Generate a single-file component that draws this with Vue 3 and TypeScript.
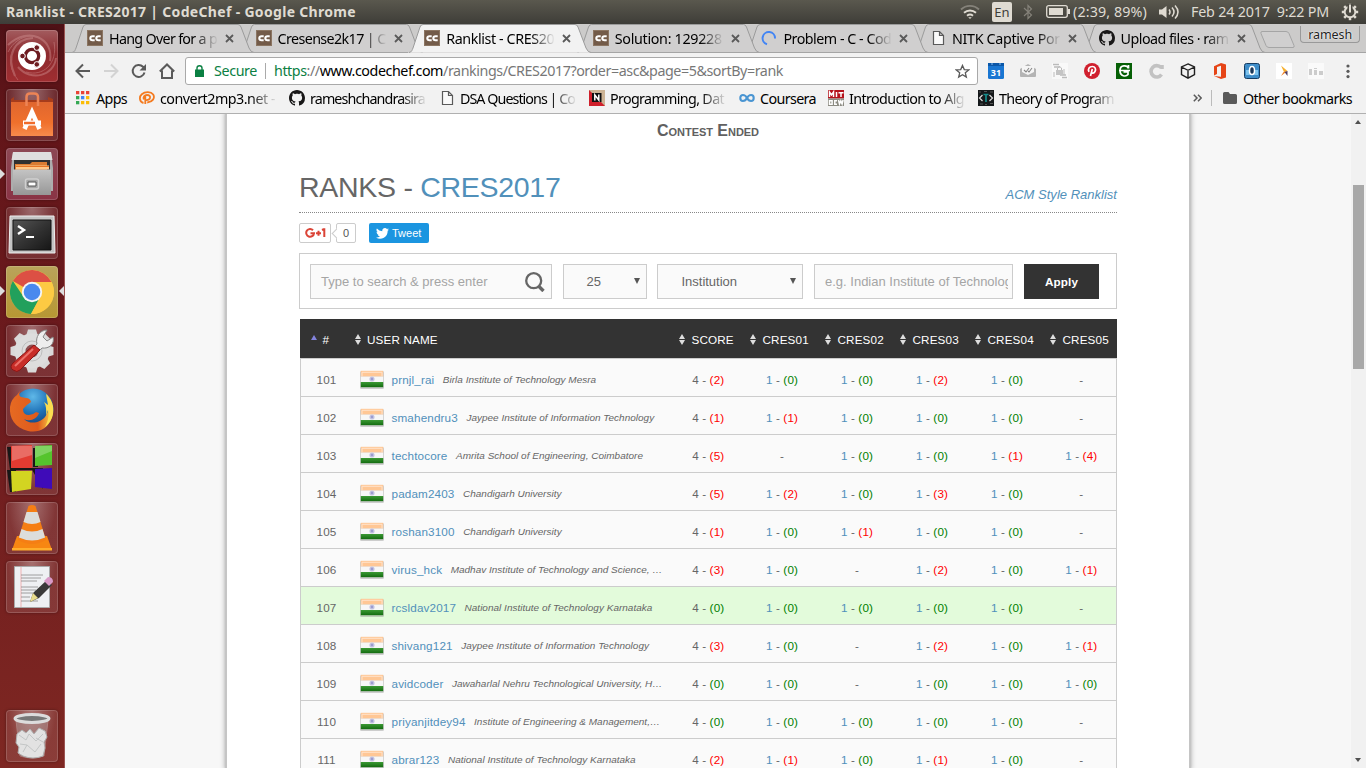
<script setup lang="ts">
import type { Directive } from 'vue'

// Tracks a label out (or in) so that it fills the given width in pixels.
const vFit: Directive<HTMLElement, number> = {
  mounted(el, binding) {
    const natural = el.getBoundingClientRect().width
    const count = (el.textContent ?? '').length
    if (count && natural) el.style.letterSpacing = `${(binding.value - natural) / count}px`
  },
}

interface Tab { icon: string; title: string; width: number; active?: boolean }
const tabs: Tab[] = [
  { icon: 'cc', title: 'Hang Over for a p', width: 108 },
  { icon: 'cc', title: 'Cresense2k17 | C', width: 108 },
  { icon: 'cc', title: 'Ranklist - CRES20', width: 108, active: true },
  { icon: 'cc', title: 'Solution: 129228', width: 107 },
  { icon: 'spin', title: 'Problem - C - Cod', width: 108 },
  { icon: 'page', title: 'NITK Captive Por', width: 108 },
  { icon: 'git', title: 'Upload files · ram', width: 108 },
]
const period = 168.5
const shape = (i: number): string => {
  const x = 7 + i * period
  return `M${x} 28.5C${x + 3} 28 ${x + 3} 26 ${x + 4} 24L${x + 11} 3Q${x + 12} .5 ${x + 14} .5H${x + 166}Q${x + 168} .5 ${x + 169} 3L${x + 177} 24Q${x + 179} 28.5 ${x + 182} 28.5`
}
const order = [6, 5, 4, 3, 1, 0, 2]

interface Bookmark { icon: string; title: string; width: number; box: number }
const bookmarks: Bookmark[] = [
  { icon: 'apps', title: 'Apps', width: 31, box: 42 },
  { icon: 'mp3', title: 'convert2mp3.net -', width: 115, box: 129 },
  { icon: 'git', title: 'rameshchandrasira', width: 115, box: 129 },
  { icon: 'page', title: 'DSA Questions | Co', width: 115, box: 129 },
  { icon: 'n', title: 'Programming, Dat', width: 114, box: 129 },
  { icon: 'coursera', title: 'Coursera', width: 56, box: 68 },
  { icon: 'mit', title: 'Introduction to Alg', width: 115, box: 129 },
  { icon: 'theory', title: 'Theory of Program', width: 115, box: 129 },
]

interface Row { rank: number; user: string; school: string; score: number; cells: (number | null)[]; own?: boolean }
const rows: Row[] = [
  { rank: 101, user: 'prnjl_rai', school: 'Birla Institute of Technology Mesra', score: 2, cells: [0, 0, 2, 0, null] },
  { rank: 102, user: 'smahendru3', school: 'Jaypee Institute of Information Technology', score: 1, cells: [1, 0, 0, 0, null] },
  { rank: 103, user: 'techtocore', school: 'Amrita School of Engineering, Coimbatore', score: 5, cells: [null, 0, 0, 1, 4] },
  { rank: 104, user: 'padam2403', school: 'Chandigarh University', score: 5, cells: [2, 0, 3, 0, null] },
  { rank: 105, user: 'roshan3100', school: 'Chandigarh University', score: 1, cells: [0, 1, 0, 0, null] },
  { rank: 106, user: 'virus_hck', school: 'Madhav Institute of Technology and Science, …', score: 3, cells: [0, null, 2, 0, 1] },
  { rank: 107, user: 'rcsldav2017', school: 'National Institute of Technology Karnataka', score: 0, cells: [0, 0, 0, 0, null], own: true },
  { rank: 108, user: 'shivang121', school: 'Jaypee Institute of Information Technology', score: 3, cells: [0, null, 2, 0, 1] },
  { rank: 109, user: 'avidcoder', school: 'Jawaharlal Nehru Technological University, H…', score: 0, cells: [0, null, 0, 0, 0] },
  { rank: 110, user: 'priyanjitdey94', school: 'Institute of Engineering & Management,…', score: 0, cells: [0, 0, 0, 0, null] },
  { rank: 111, user: 'abrar123', school: 'National Institute of Technology Karnataka', score: 2, cells: [1, 0, 1, 0, null] },
]
const heads = ['SCORE', 'CRES01', 'CRES02', 'CRES03', 'CRES04', 'CRES05']
const tone = (n: number): string => (n > 0 ? 'bad' : 'good')
const teeth = [0, 45, 90, 135, 180, 225, 270, 315]
</script>

<template>
  <div class="desktop">
    <svg class="defs" width="0" height="0">
      <defs>
        <linearGradient id="gOrange" x1="0" y1="0" x2="0" y2="1"><stop offset="0" stop-color="#e0662f" /><stop offset=".6" stop-color="#f0702c" /><stop offset="1" stop-color="#f78b4c" /></linearGradient>
        <linearGradient id="gGrey" x1="0" y1="0" x2="0" y2="1"><stop offset="0" stop-color="#c4c4c4" /><stop offset="1" stop-color="#979797" /></linearGradient>
        <linearGradient id="gTerm" x1="0" y1="0" x2="1" y2="1"><stop offset="0" stop-color="#555" /><stop offset=".5" stop-color="#333" /><stop offset="1" stop-color="#161616" /></linearGradient>
        <radialGradient id="gBlue" cx=".5" cy=".2" r=".8"><stop offset="0" stop-color="#5fb8e8" /><stop offset=".5" stop-color="#1f72b8" /><stop offset="1" stop-color="#12356e" /></radialGradient>
        <linearGradient id="gFox" x1="0" y1="0" x2="1" y2="0"><stop offset="0" stop-color="#e66a22" /><stop offset=".65" stop-color="#df5a1c" /><stop offset="1" stop-color="#fbd84a" /></linearGradient>
        <linearGradient id="gFlag" x1="0" y1="0" x2="0" y2="1"><stop offset="0" stop-color="#3c9a35" /><stop offset="1" stop-color="#136b10" /></linearGradient>
        <symbol id="cc" viewBox="0 0 16 16"><rect x=".5" y=".5" width="15" height="15" fill="#735b49" stroke="#8b7562" /><g fill="none" stroke="#fff" stroke-width="2.100"><path d="M7.700 6.200H5.500Q3.300 6.200 3.300 8.200T5.500 10.200H7.700M13.700 6.200H11.500Q9.300 6.200 9.300 8.200T11.500 10.200H13.700" /></g></symbol>
        <symbol id="spin" viewBox="0 0 16 16"><path d="M14 8.500A6.200 6.200 0 1 0 6 14.200" fill="none" stroke="#4285f4" stroke-width="2" /></symbol>
        <symbol id="page" viewBox="0 0 16 16"><path d="M3.500 1.500h6l4 4v9h-10zM9.500 1.500v4h4" fill="#fafafa" stroke="#5a5a5a" stroke-width="1.200" /></symbol>
        <symbol id="git" viewBox="0 0 16 16"><path fill="#181717" d="M8 0C3.58 0 0 3.58 0 8c0 3.54 2.29 6.53 5.47 7.59.4.07.55-.17.55-.38 0-.19-.01-.82-.01-1.49-2.01.37-2.53-.49-2.69-.94-.09-.23-.48-.94-.82-1.13-.28-.15-.68-.52-.01-.53.63-.01 1.08.58 1.23.82.72 1.21 1.87.87 2.33.66.07-.52.28-.87.51-1.07-1.78-.2-3.64-.89-3.64-3.95 0-.87.31-1.59.82-2.15-.08-.2-.36-1.02.08-2.12 0 0 .67-.21 2.2.82.64-.18 1.32-.27 2-.27s1.36.09 2 .27c1.53-1.04 2.2-.82 2.2-.82.44 1.1.16 1.92.08 2.12.51.56.82 1.27.82 2.15 0 3.07-1.87 3.75-3.65 3.95.29.25.54.73.54 1.48 0 1.07-.01 1.93-.01 2.2 0 .21.15.46.55.38A8.01 8.01 0 0 0 16 8c0-4.42-3.58-8-8-8z" /></symbol>
        <symbol id="apps" viewBox="0 0 16 16"><path d="M0 1h3.300v3.300H0zM5 1h3.300v3.300H5zM10 1h3.300v3.300H10z" fill="#ea4335" /><path d="M0 6h3.300v3.300H0z" fill="#34a853" /><path d="M5 6h3.300v3.300H5z" fill="#4285f4" /><path d="M10 6h3.300v3.300H10zM5 11h3.300v3.300H5zM10 11h3.300v3.300H10z" fill="#fbbc05" /><path d="M0 11h3.300v3.300H0z" fill="#34a853" /></symbol>
        <symbol id="mp3" viewBox="0 0 16 16"><g fill="none" stroke="#f47b20" stroke-width="1.800"><path d="M4.500 13C.2 12 0 6.500 2.800 4.200 6 1.500 12 1.500 14.200 4.500c2 3.500-.5 7.500-6 8" /><path d="M6.300 14V6M4.800 9.500C3.800 7 5.500 5 8 5s3.500 1.200 3 3-2.200 2.200-4.500 2" /></g></symbol>
        <symbol id="n" viewBox="0 0 16 16"><path d="M0 0h16v16H0z" fill="#cdb495" /><path d="M0 0l16 16H0z" fill="#cf1f2b" /><path d="M3 3h9.500v9H3z" fill="#111" /><path d="M5.800 10.500V5l4 5V4.500" fill="none" stroke="#fff" stroke-width="1.500" /></symbol>
        <symbol id="coursera" viewBox="0 0 16 16"><path d="M8 8C6 4 1.300 4 1.300 8S6 12 8 8s6.700-4 6.700 0S10 12 8 8" fill="none" stroke="#4a95d2" stroke-width="2.100" /></symbol>
        <symbol id="mit" viewBox="0 0 16 16"><path d="M0 0h16v8.500H0z" fill="#b5121b" /><path d="M0 8.500h16V16H0z" fill="#8c8b82" /><g fill="none" stroke="#fff" stroke-width="1.500"><path d="M1.500 7V2l2 3 2-3v5M8.500 2v5M10.500 2.700h5M13 2.700V7" /><path d="M1.500 10.700h2.600v3.500H1.500zM9 10.700H6.800v3.500H9M10.500 10l1 4 1.300-3 1.300 3 1-4" /></g></symbol>
        <symbol id="theory" viewBox="0 0 16 16"><path d="M0 0h16v16H0z" fill="#15181a" /><path d="M4.500 5L1.500 8l3 3M11.500 5l3 3-3 3" fill="none" stroke="#ddd" stroke-width="1.200" /><path d="M5.500 4.500h5M8 4.500V12" stroke="#168c8b" stroke-width="1.700" /><path d="M1 2h2M6 1.500h3M12 2h3M2 14h3M7 14.500h2M12 13.500h3" stroke="#555" /></symbol>
      </defs>
    </svg>

    <header class="titlebar">
      <span v-fit="350" class="wintitle">Ranklist - CRES2017 | CodeChef - Google Chrome</span>
      <div class="tray">
        <svg width="20" height="16" viewBox="0 0 20 16" fill="none" stroke-width="1.900"><path d="M1 5.500a13 13 0 0 1 18 0" stroke="#85827a" /><path d="M4 8.800a9 9 0 0 1 12 0M7 11.700a4.800 4.800 0 0 1 6 0" stroke="#dfdbd2" /><path d="M8.200 13.200h3.600L10 15z" fill="#dfdbd2" /></svg>
        <span class="lang">En</span>
        <svg class="bt" width="10" height="16" viewBox="0 0 10 16" fill="none" stroke="#85827a" stroke-width="1.200"><path d="M1 4l7.500 7L5 14.500v-13L8.500 5 1 12" /></svg>
        <svg class="batt" width="24" height="13" viewBox="0 0 24 13"><rect x=".7" y=".7" width="20.600" height="11.600" rx="2" fill="none" stroke="#dfdbd2" stroke-width="1.300" /><path d="M3 3h14v7H3z" fill="#dfdbd2" /><path d="M22 4h2v5h-2z" fill="#dfdbd2" /></svg>
        <span v-fit="74" class="charge">(2:39, 89%)</span>
        <svg class="snd" width="20" height="16" viewBox="0 0 20 16"><path d="M0 5.500h3L7.500 2v12L3 10.500H0z" fill="#dfdbd2" /><path d="M10 5.500q2 2.500 0 5M13 3.500q4 4.500 0 9M16 1.500q6 6.500 0 13" fill="none" stroke="#dfdbd2" stroke-width="1.500" /></svg>
        <span v-fit="138" class="clock">Feb 24 2017&nbsp; 9:22 PM</span>
        <svg class="gear" width="18" height="18" viewBox="0 0 18 18" stroke="#dfdbd2" fill="none"><circle cx="9" cy="9" r="5.300" stroke-width="1.900" /><path v-for="t in teeth" :key="t" d="M9 3.500V.8" stroke-width="2.500" :transform="`rotate(${t} 9 9)`" /><path d="M9 1v8" stroke="#4a4841" stroke-width="5" /><path d="M9 1.500v8" stroke-width="2" /></svg>
      </div>
    </header>

    <div class="below">
      <aside class="launcher">
        <div class="tile dash">
          <svg viewBox="0 0 52 52"><g fill="none" stroke="#d79b9b" opacity=".4"><path d="M2 15C22-4 48 8 44 31M50 28C48 46 25 52 12 37M9 46C0 26 8 9 27 8" stroke-width="2" /><path d="M2 22C12 2 37 0 44 21M12 50C-2 32 6 16 15 11M48 12C52 34 37 47 20 42" /></g><circle cx="26" cy="26" r="14" fill="#fff" /><circle cx="26" cy="26" r="6.700" fill="none" stroke="#6d1b20" stroke-width="3.300" /><g fill="#6d1b20" stroke="#fff" stroke-width="1"><circle cx="16.500" cy="26" r="2.800" /><circle cx="30.800" cy="17.600" r="2.800" /><circle cx="30.800" cy="34.400" r="2.800" /></g></svg>
        </div>
        <div class="tile">
          <svg viewBox="0 0 52 52"><path d="M5 10l3-2v3h34V8l5 2v6H5z" fill="#a63c1c" /><path d="M5 13h42v34H5z" fill="url(#gOrange)" /><path d="M20.500 17V8q0-3.500 3.500-3.500h4Q32 4.500 32 8v9" fill="none" stroke="#ed8455" stroke-width="2.500" /><path d="M18.500 40l7.500-17 7.500 17" fill="none" stroke="#fff" stroke-width="4.500" /><path d="M17 34h18" stroke="#fff" stroke-width="5" /><path d="M18 34h11" stroke="#f06b2b" stroke-width="2.500" /></svg>
        </div>
        <div class="tile files">
          <svg viewBox="0 0 52 52"><path d="M7 4h38l2 16v23H5V20z" fill="#adadad" /><path d="M7 4h38l1.500 8h-41z" fill="#dedede" /><path d="M8 12h36v11H8z" fill="#303030" /><path d="M9 16h15l2-2h15v8H9z" fill="#da7c32" /><path d="M10 17.500h33v4H10z" fill="#ffc98a" /><path d="M9 18.500h34" stroke="#e87524" /><path d="M7 21.500h38V47H7z" fill="url(#gGrey)" /><rect x="19.500" y="31" width="13" height="10" rx="2" fill="#a5a5a5" stroke="#d0d0d0" stroke-width="1.500" /><path d="M22 34h8v4h-8z" fill="#fff" stroke="#555" /></svg>
        </div>
        <div class="tile">
          <svg viewBox="0 0 52 52"><path d="M4 9h44l1 37H3z" fill="#c4c4c4" stroke="#eee" /><path d="M7 13h38v30H7z" fill="url(#gTerm)" stroke="#111" /><path d="M12 19l6 4-6 4" fill="none" stroke="#fff" stroke-width="2.400" /><path d="M20 30h8" stroke="#fff" stroke-width="2" /></svg>
        </div>
        <div class="tile chrome">
          <svg viewBox="0 0 52 52"><circle cx="26" cy="26" r="22" fill="#fac942" /><path d="M26 26L6.900 15A22 22 0 0 1 45.500 16H26z" fill="#dc5044" /><path d="M26 26l-9 4L6.900 15A22 22 0 0 0 25 48l9-17z" fill="#22a05c" /><path d="M26 16h19.500A22 22 0 0 1 25 48l9.500-17z" fill="#fdca43" /><circle cx="26" cy="26" r="10.200" fill="#f5f5f5" /><circle cx="26" cy="26" r="8.300" fill="#4a89ee" /></svg>
        </div>
        <div class="tile">
          <svg viewBox="0 0 52 52"><g fill="#d9d9d9"><path v-for="t in teeth" :key="t" d="M20 11l2-6.500h8l2 6.500z" :transform="`rotate(${t} 26 26)`" /></g><circle cx="26" cy="26" r="12" fill="none" stroke="#ddd" stroke-width="11" /><circle cx="26" cy="26" r="10" fill="none" stroke="#b5b5b5" stroke-width=".8" /><path d="M31 19c-2-7 3-14 10-14l-4 7 4 4 6-4c2 7-4 12-11 11l-3 3-5-4z" fill="#eee" stroke="#888" /><path d="M28 20l6 5-20 20q-3 3-7 0t0-7z" fill="#c82d28" stroke="#8b1515" /><path d="M27 24L9 41" stroke="#ec716a" stroke-width="2" /></svg>
        </div>
        <div class="tile">
          <svg viewBox="0 0 52 52"><circle cx="27" cy="25" r="20.500" fill="url(#gBlue)" /><path d="M14 7q-2 4 1 6l5 1q4 0 5 4-5 3-8 7 0 6 6 6 4 0 7-3l3 1c-2 6-9 9-15 6 6 6 16 4 21-2 5-7 5-14 3-19 5 5 6 12 4 19C42 46 31 49 22 47 9 44 3 34 4 23q1-8 7-12z" fill="url(#gFox)" /><path d="M40 10c10 8 10 25-1 33 4-8 4-13 3-17l-2 6q1-9-2-14l4 3z" fill="#fbdc50" /></svg>
        </div>
        <div class="tile">
          <svg viewBox="0 0 52 52"><path d="M1 4h25v23H4zM27 5h5v19h-5zM1 27h9v22H4zM25 25h12v21z" fill="#171717" /><path d="M5 3l21-1v23H5z" fill="#e23b31" /><path d="M29 3l17-1v20l-17 1z" fill="#55c42d" /><path d="M5 28h21l-1 18-19 3z" fill="#d3d421" /><path d="M29 26l17-1v21l-17-2z" fill="#3f0bb8" /><path d="M6 3h20v9L6 18zM29 3h17v5l-17 7z" fill="#fff" opacity=".25" /></svg>
        </div>
        <div class="tile">
          <svg viewBox="0 0 52 52"><path d="M11 34h30l5 14H6z" fill="#f78612" /><path d="M6 46h40v2.500H6z" fill="#ffae2b" /><path d="M22.500 4q3.500-2 7 0L40 38q-14 8-28 0z" fill="#f57e14" /><path d="M20.500 10h11l3 10q-8.500 4-17 0zM15.500 27q10.500 5 21 0l2.600 8.500q-13 6-26.200 0z" fill="#dcdddb" /></svg>
        </div>
        <div class="tile">
          <svg viewBox="0 0 52 52"><path d="M8.500 5.500h35v41h-35z" fill="#eef0f3" stroke="#aaa" /><path d="M15 6v40" stroke="#f09a9a" stroke-width=".7" /><path d="M15 14h22M15 17h20M15 20h16M15 26h17M15 29h15M15 32h12M15 36h9M15 40h17" stroke="#888" stroke-width=".8" /><path d="M24 41l3-9 14-13 5 5-13 13z" fill="#393939" /><path d="M24 41l3-9 5 5z" fill="#e8dc8c" /><path d="M38 20l4-4q5 0 5 5l-4 4z" fill="#d99ac8" /></svg>
        </div>
        <div class="tile trash">
          <svg viewBox="0 0 52 52"><path d="M10 10h32l-4 36q-12 4-24 0z" fill="#bbb" opacity=".35" stroke="#ddd" /><path d="M11 24l5-4 4 3 4-4 4 5 5-6 6 3 2 6-3 5 1 6-2 8q-10 4-20 0l-5-3 1-6-3-4z" fill="#e2e2e2" stroke="#b0b0b0" /><path d="M13 25l7 5 3-6 7 7 7-7M17 42l4-7 8 7 6-8M14 34l7 1M30 28l7 4" stroke="#c3c6c6" stroke-width="1" fill="none" /><ellipse cx="26" cy="8.500" rx="17" ry="4" fill="#777" stroke="#dcdcdc" stroke-width="3" /></svg>
        </div>
        <i class="pip files-pip"></i><i class="pip chrome-pip"></i><i class="pip focus-pip"></i>
      </aside>

      <section class="browser">
        <nav class="tabstrip">
          <svg class="shapes" width="1301" height="29" viewBox="0 0 1301 29">
            <path v-for="i in order" :key="i" :d="shape(i)" :fill="tabs[i].active ? '#f2f2f2' : '#d0cfcf'" stroke="#9b9b9b" />
            <path d="M0 28.500H343M526 28.500H1301" stroke="#a5a5a5" fill="none" />
            <path d="M1197 7.500h24q2 0 3 2l5 12q.6 2-1 2h-24q-2 0-3-2l-5-12q-.6-2 1-2z" fill="#d0cfcf" stroke="#a5a5a5" />
          </svg>
          <div v-for="tab in tabs" :key="tab.title" class="tab">
            <svg width="16" height="16"><use :href="'#' + tab.icon" /></svg>
            <span class="label"><span v-fit="tab.width">{{ tab.title }}</span></span>
            <svg class="close" width="9" height="9" viewBox="0 0 9 9"><path d="M1 1l7 7M8 1L1 8" stroke="#5a5a5a" stroke-width="1.800" /></svg>
          </div>
          <div class="profile"><span v-fit="44">ramesh</span></div>
        </nav>

        <div class="toolbar">
          <svg class="nav" width="16" height="16" viewBox="0 0 16 16" fill="none" stroke="#5a5a5a" stroke-width="2"><path d="M15 8H2M8 1.500L1.500 8 8 14.500" /></svg>
          <svg class="nav" width="16" height="16" viewBox="0 0 16 16" fill="none" stroke="#d3d3d3" stroke-width="2"><path d="M1 8h13M8 1.500L14.500 8 8 14.500" /></svg>
          <svg class="nav" width="16" height="16" viewBox="0 0 16 16"><path d="M13.500 9.500A6 6 0 1 1 12 3.800l1 1" fill="none" stroke="#5a5a5a" stroke-width="2" /><path d="M15 1v6.500H8.500z" fill="#5a5a5a" /></svg>
          <svg class="nav" width="16" height="16" viewBox="0 0 16 16" fill="none" stroke="#5a5a5a" stroke-width="2"><path d="M.8 8.500L8 1.500l7.200 7M3 7.500V15h10V7.500" /></svg>
          <div class="omnibox">
            <svg width="9" height="12" viewBox="0 0 9 12"><path d="M0 4.500h9V12H0z" fill="#0b8043" /><path d="M2 5V3q0-2.200 2.500-2.200T7 3v2" fill="none" stroke="#0b8043" stroke-width="1.400" /></svg>
            <span v-fit="43" class="secure">Secure</span><i class="bar"></i>
            <span v-fit="509" class="url"><b>https</b>://<em>www.codechef.com</em>/rankings/CRES2017?order=asc&amp;page=5&amp;sortBy=rank</span>
            <svg class="star" width="15" height="15" viewBox="0 0 16 16"><path d="M8 1.500l1.900 4.400 4.700.4L11 9.400l1.100 4.600L8 11.500 3.900 14 5 9.400 1.400 6.300l4.700-.4z" fill="none" stroke="#5a5a5a" stroke-width="1.400" /></svg>
          </div>
          <div class="exts">
            <svg viewBox="0 0 16 16"><rect width="16" height="16" rx="1.500" fill="#1976d2" /><path d="M0 0h16v3H0z" fill="#0b57a8" /><path d="M3 1h2M11 1h2" stroke="#89bdf0" /><text x="8" y="12.500" text-anchor="middle" font-size="9" font-weight="700" fill="#fff">31</text></svg>
            <svg viewBox="0 0 16 16"><path d="M0 6l8-5 8 5v7q0 1-1 1H1q-1 0-1-1z" fill="#b4b4b4" /><path d="M2 3h12v6l-6 3-6-3z" fill="#f5f5f5" /><path d="M4 7l2 2 3-4M8 8l1 1 3-4" fill="none" stroke="#888" stroke-width="1.100" /></svg>
            <svg viewBox="0 0 16 16"><path d="M0 0h16v16H0z" fill="#f9f9f9" /><path d="M1 1.500h6M2 4h6M10 14.500h5M8 12h6" stroke="#bbb" stroke-width="1.500" /><rect x="4" y="7" width="7" height="5" fill="#c4c4c4" /><path d="M5.500 7V5q2-3 4 0v2M2 9v5M12 6v6" fill="none" stroke="#bbb" /></svg>
            <svg viewBox="0 0 16 16"><circle cx="8" cy="8" r="8" fill="#d0202e" /><path d="M5 8.800C3.500 6 5.500 3.500 8.300 3.500s4 2.800 2.700 5-3 2-3.600.8M8.300 6L6.500 13" fill="none" stroke="#fff" stroke-width="1.700" /></svg>
            <svg viewBox="0 0 16 16"><path d="M0 0h16v16H0z" fill="#066006" /><path d="M12.500 5.500C11.500 2 4 1.500 4 7.500s6 6.500 8 4V9H7.500M3 7.500h11M12.500 2v3.500" fill="none" stroke="#fff" stroke-width="1.700" /></svg>
            <svg viewBox="0 0 16 16"><path d="M13 4.500A5.700 5.700 0 1 0 13.500 11.500M14 2v4" fill="none" stroke="#c2c2c2" stroke-width="3.600" /></svg>
            <svg viewBox="0 0 16 16"><path d="M8 .9l6.500 3v7.800L8 15.200l-6.500-3.500V3.900zM1.500 4L8 7.300 14.500 4M8 7.300v7.500" fill="none" stroke="#202020" stroke-width="1.400" /></svg>
            <svg viewBox="0 0 16 16"><path d="M9 0l5 1.500v13L9 16l-7-3 7 .8V2.800L5 4v7l-3 1.500V3.200z" fill="#e64517" /></svg>
            <svg viewBox="0 0 16 16"><rect x=".5" y=".5" width="15" height="15" rx="2" fill="#3e8dc9" stroke="#173d62" /><path d="M2 7h12v5H2z" fill="#7fc3ec" /><ellipse cx="8" cy="7.500" rx="2.500" ry="4" fill="#1c3858" stroke="#fff" stroke-width="1.500" /></svg>
            <svg viewBox="0 0 16 16"><path d="M0 0h16v16H0z" fill="#fff" /><path d="M5 2.500L11.500 8 8 9z" fill="#f7b02d" /><path d="M11.500 8L5 13l2.500-4z" fill="#f1862a" /><path d="M8.500 9l3-1v5z" fill="#4b3c67" /></svg>
            <svg viewBox="0 0 16 16"><path d="M0 0h16v16H0z" fill="#fafafa" /><path d="M1 6h3v6H1zM6 7h3v5H6zM11 8h4v4h-4zM6 5h3v1H6z" fill="#ccc" /></svg>
            <svg class="dots" viewBox="0 0 16 16" fill="#5a5a5a"><circle cx="8" cy="3" r="1.600" /><circle cx="8" cy="8.300" r="1.600" /><circle cx="8" cy="13.600" r="1.600" /></svg>
          </div>
        </div>

        <div class="bookmarks">
          <div v-for="b in bookmarks" :key="b.title" class="bookmark">
            <svg width="16" height="16"><use :href="'#' + b.icon" /></svg>
            <span class="blabel" :class="{ fade: b.width > 100 }" :style="{ width: b.box - (b.width > 100 ? 12 : 0) + 'px', marginRight: (b.width > 100 ? 12 : 0) + 'px' }"><span v-fit="b.width">{{ b.title }}</span></span>
          </div>
          <div class="other"><svg class="more" width="9" height="8" viewBox="0 0 9 8"><path d="M.8.8L4 4 .8 7.200M5 .8L8.200 4 5 7.200" fill="none" stroke="#5a5a5a" stroke-width="1.500" /></svg><i></i><svg width="14" height="12" viewBox="0 0 14 12"><path d="M0 1.500Q0 0 1.500 0h4L7 2h5.500Q14 2 14 3.500v7q0 1.500-1.500 1.500h-11Q0 12 0 10.500z" fill="#5a5a5a" /></svg><span v-fit="109">Other bookmarks</span></div>
        </div>

        <div class="viewport">
          <main class="page">
            <div class="ended"><span v-fit="102">Contest Ended</span></div>
            <div class="heading">
              <h1><span v-fit="261.5">RANKS - <a>CRES2017</a></span></h1>
              <a class="acm"><span v-fit="111.5">ACM Style Ranklist</span></a>
            </div>
            <div class="social">
              <div class="gplus"><svg width="21" height="12" viewBox="0 0 21 12" fill="none" stroke="#db4437" stroke-width="2"><path d="M8 3.200A3.900 3.900 0 1 0 9 6.300H5.500M11 6.200h5M13.500 3.700v5M17 3l1.500-.7h.8V10" /></svg></div>
              <div class="count">0</div>
              <div class="tweet"><svg width="13" height="11" viewBox="0 0 24 20"><path fill="#fff" d="M24 2.400a10 10 0 0 1-2.800.8A5 5 0 0 0 23.300.5a10 10 0 0 1-3.100 1.200A4.900 4.900 0 0 0 11.700 6 14 14 0 0 1 1.700.9a4.900 4.900 0 0 0 1.500 6.600A5 5 0 0 1 1 6.900a4.900 4.900 0 0 0 3.900 4.900 5 5 0 0 1-2.200.1 4.900 4.900 0 0 0 4.600 3.400A9.900 9.900 0 0 1 0 17.400 14 14 0 0 0 21.500 5a10 10 0 0 0 2.500-2.600z" /></svg><span>Tweet</span></div>
            </div>
            <div class="filters">
              <div class="field search"><span v-fit="166.5">Type to search &amp; press enter</span><svg width="20" height="20" viewBox="0 0 20 20" fill="none" stroke="#666"><circle cx="8.700" cy="8.700" r="7.500" stroke-width="2.300" /><path d="M13.500 14l5 5" stroke-width="3.400" /></svg></div>
              <div class="field select size"><span>25</span><i></i></div>
              <div class="field select kind"><span v-fit="55.5">Institution</span><i></i></div>
              <div class="field where"><span>e.g. Indian Institute of Technology</span></div>
              <div class="apply">Apply</div>
            </div>
            <div class="table">
              <div class="line thead">
                <div class="hash"><svg width="6" height="5" viewBox="0 0 6 5"><path d="M3 0l3 5H0z" fill="#8383dd" /></svg><span>#</span></div>
                <div class="h user-h"><svg width="6" height="11" viewBox="0 0 6 11"><path d="M3 0l3 5H0zM0 6h6l-3 5z" fill="#ddd" /></svg><span>USER NAME</span></div>
                <div v-for="h in heads" :key="h" class="h"><svg width="6" height="11" viewBox="0 0 6 11"><path d="M3 0l3 5H0zM0 6h6l-3 5z" fill="#ddd" /></svg><span>{{ h }}</span></div>
              </div>
              <div v-for="r in rows" :key="r.rank" class="line row" :class="{ own: r.own }">
                <div class="mid">{{ r.rank }}</div>
                <div class="user">
                  <svg width="24" height="19" viewBox="0 0 24 19"><rect x="0" y="1" width="24" height="18" rx="1.500" fill="#777" opacity=".35" /><path d="M.8.8h22.400v5.800H.8z" fill="#ffc795" /><path d="M2 2.300h20M2 2.300v4M22 2.300v4" stroke="#ffe3cb" fill="none" /><path d="M.8 6.600h22.400v5.600H.8z" fill="#f7f7f7" /><path d="M.8 12h22.400v5.200H.8z" fill="url(#gFlag)" /><circle cx="12" cy="9" r="2" fill="#9c9ccf" stroke="#c5c5e2" stroke-width="1.200" /></svg>
                  <a>{{ r.user }}</a><em>{{ r.school }}</em>
                </div>
                <div class="mid">4 - <span :class="tone(r.score)">({{ r.score }})</span></div>
                <div v-for="(c, k) in r.cells" :key="k" class="mid">
                  <template v-if="c !== null"><a>1</a> - <span :class="tone(c)">({{ c }})</span></template>
                  <template v-else>-</template>
                </div>
              </div>
            </div>
          </main>
          <div class="scrollbar"><i class="up"></i><i class="thumb"></i><i class="down"></i></div>
        </div>
      </section>
    </div>
  </div>
</template>

<style>
body { margin: 0; overflow: hidden; }
</style>

<style scoped>
* { box-sizing: border-box; }
.desktop { width: 1366px; height: 768px; overflow: hidden; display: flex; flex-direction: column; font-family: "Noto Sans", "Open Sans", sans-serif; font-size: 14.3px; color: #000; white-space: nowrap; }
.defs { position: absolute; }
svg { display: block; flex: none; }
span { flex: none; }
.titlebar { height: 24px; flex: none; display: flex; align-items: center; justify-content: space-between; background: linear-gradient(#5a584e, #3e3d38); color: #dfdbd2; padding: 0 8px 1px 6px; }
.wintitle { font-weight: 700; font-size: 14px; }
.tray { display: flex; align-items: center; width: 398px; font-size: 14.3px; }
.lang { width: 20px; height: 20px; margin-left: 12px; background: #dfdbd2; color: #3f3e39; border-radius: 2px; font-size: 13px; line-height: 20px; text-align: center; }
.bt { margin-left: 11px; }
.batt { margin-left: 13px; }
.charge { margin-left: 3px; }
.snd { margin-left: 12px; }
.clock { margin-left: 12px; }
.gear { margin-left: 12px; }
.below { display: flex; flex: 1; min-height: 0; }
.launcher { position: relative; width: 65px; flex: none; padding: 6px 7px 6px 6px; display: flex; flex-direction: column; gap: 7px; background: linear-gradient(#4e1116 0, #621519 90px, #6d1b1e 360px, #7e2722 100%); border-right: 1px solid #9b5351; }
.tile { width: 52px; height: 52px; flex: none; border-radius: 4px; background: radial-gradient(ellipse at 50% 0, rgba(255, 255, 255, .36), rgba(255, 255, 255, .1) 65%); box-shadow: inset 0 0 0 1px rgba(255, 255, 255, .16), 0 0 3px rgba(0, 0, 0, .35); }
.dash { background: linear-gradient(#a35c5f, #8d2a2e 45%, #a02e31); }
.files { background: linear-gradient(#8c4854, #8a3345); }
.chrome { background: linear-gradient(#b9a35b, #b79733); }
.trash { margin-top: auto; }
.pip { position: absolute; border: 5px solid transparent; border-left-color: #ddd; border-right-width: 0; left: 0; }
.files-pip { top: 145px; }
.chrome-pip { top: 262px; }
.focus-pip { top: 262px; left: 59px; border-left-width: 0; border-right: 5px solid #ddd; }
.browser { flex: 1; min-width: 0; display: flex; flex-direction: column; background: #f2f2f2; }
.tabstrip { position: relative; height: 29px; flex: none; display: flex; background: #cccbca; padding-left: 7px; }
.shapes { position: absolute; left: 0; top: 0; }
.tab { position: relative; width: 168.6px; flex: none; display: flex; align-items: center; padding: 0 0 1px 15px; }
.label { margin-left: 6px; width: 109px; overflow: hidden; mask-image: linear-gradient(90deg, #000 78%, transparent); }
.label span, .blabel span { display: inline-block; }
.close { margin-left: 7px; }
.profile { position: relative; margin: 2px 0 0 48px; width: 60px; height: 17px; border: 1px solid #999; border-top: 0; border-radius: 0 0 4px 4px; font-size: 12.5px; line-height: 18px; text-align: center; color: #222; text-shadow: 0 0 1px #fff, 0 0 2px #fff; }
.toolbar { height: 32px; flex: none; display: flex; align-items: center; padding: 4px 0 0 10px; }
.nav { margin-right: 12px; }
.omnibox { width: 793px; height: 28px; margin-left: -2px; border: 1px solid #a9a9a9; border-radius: 3px; background: #fff; display: flex; align-items: center; padding-left: 9px; flex: none; }
.secure { margin: -2px 0 0 10px; color: #0b8043; }
.bar { width: 1px; height: 16px; background: #aaa; margin: 0 8px; }
.url { color: #777; margin-top: -2px; }
.url b { font-weight: 400; color: #0b8043; }
.url em { font-style: normal; color: #000; }
.star { margin-left: auto; margin-right: 7px; }
.exts { display: flex; gap: 16px; margin-left: 10px; font-family: "Open Sans", sans-serif; }
.exts svg { width: 16px; height: 16px; }
.bookmarks { height: 29px; flex: none; display: flex; align-items: center; padding: 0 14px 2px 11px; border-bottom: 1px solid #b0b0b0; }
.bookmark { display: flex; align-items: center; gap: 5px; }
.bookmark:first-child { gap: 4px; margin-right: 1px; }
.fade { overflow: hidden; mask-image: linear-gradient(90deg, #000 78%, transparent); }
.other { margin-left: auto; display: flex; align-items: center; }
.other i { width: 1px; height: 16px; background: #bbb; margin: 0 11px 0 9px; }
.other span { margin-left: 6px; }
.viewport { flex: 1; min-height: 0; display: flex; background: #f7f7f7; overflow: hidden; font-family: "Liberation Sans", Arial, sans-serif; }
.page { width: 962px; flex: none; margin: 0 auto; background: #fff; box-shadow: 0 0 1px 2px #c5c5c5, 0 0 5px 2px #aaa; padding: 0 72px; color: #666; }
.scrollbar { position: relative; width: 15px; background: #f1f1f1; flex: none; }
.up, .down { position: absolute; left: 4px; border: 3.500px solid transparent; border-top-width: 0; border-bottom: 4px solid #505050; top: 6px; }
.down { top: auto; bottom: 6px; border-bottom-width: 0; border-top: 4px solid #505050; }
.thumb { position: absolute; left: 2px; top: 71px; width: 11px; height: 184px; background: #a8a8a8; }
.ended { height: 33px; display: flex; justify-content: center; align-items: center; font-size: 16px; font-weight: 700; font-variant: small-caps; color: #606060; }
.heading { height: 66px; display: flex; justify-content: space-between; border-bottom: 1px dotted #888; }
h1 { margin: 23px 0 0; font-size: 28.5px; font-weight: 400; line-height: 34px; }
a { color: #5190ba; }
.acm { margin-top: 39px; font-size: 13px; font-style: italic; line-height: 18px; }
.social { display: flex; height: 20px; margin-top: 10px; font-size: 11px; }
.gplus, .count { border: 1px solid #ccc; border-radius: 2px; display: flex; align-items: center; justify-content: center; }
.gplus { width: 32px; }
.count { position: relative; width: 20px; margin-left: 5px; color: #555; }
.count::before { content: ""; position: absolute; left: -4px; top: 6px; width: 6px; height: 6px; border: 1px solid #ccc; border-top: 0; border-right: 0; background: #fff; transform: rotate(45deg); }
.tweet { width: 60px; margin-left: 13px; border-radius: 2px; background: #1b95e0; color: #fff; display: flex; align-items: center; gap: 3px; padding-left: 7px; }
.filters { margin-top: 10px; height: 56px; border: 1px solid #ccc; padding: 10px; display: flex; font-size: 13px; }
.field { height: 35px; border: 1px solid #ccc; background: #fafafa; display: flex; align-items: center; flex: none; color: #a5a5a5; overflow: hidden; }
.search { width: 242px; padding: 0 6px 0 10px; justify-content: space-between; }
.select { color: #666; justify-content: space-between; padding-right: 6px; }
.select i { border: 3px solid transparent; border-top: 6px solid #555; border-bottom: 0; margin-top: -2px; }
.size { width: 84px; margin-left: 11px; padding-left: 22.500px; }
.kind { width: 146px; margin-left: 10px; padding-left: 23.500px; }
.where { width: 199px; margin-left: 11px; padding: 0 5px 0 10px; }
.where span { width: 183px; overflow: hidden; }
.apply { width: 75px; height: 35px; margin-left: 11px; background: #333; color: #fff; font-size: 11.700px; letter-spacing: .1px; font-weight: 700; text-align: center; line-height: 36px; }
.table { margin: 10px 0 0 1px; font-size: 11.700px; letter-spacing: .14px; }
.line { display: grid; grid-template-columns: 51px 322px 71.500px 75px 75px 75px 75px 1fr; align-items: center; }
.thead { height: 39px; background: #333; color: #fff; }
.thead > div { display: flex; align-items: center; padding-top: 2px; }
.hash { gap: 6px; padding-left: 10.500px; }
.hash svg { margin-bottom: 4px; }
.h { gap: 6.500px; padding-left: 5.500px; }
.thead > .h:nth-child(3) { padding-left: 6px; }
.thead > .user-h { padding-left: 3.500px; }
.row { height: 38px; border: 1px solid #ccc; border-bottom: 0; background: #fafafa; padding-top: 4px; }
.own { background: #e3fbdb; }
.mid { text-align: center; padding-right: 2px; }
.mid:nth-child(3) { padding-right: 3px; }
.mid:last-child { padding: 0 0 0 1px; }
.row > .mid:first-child { padding-right: 0; }
.user { display: flex; align-items: center; padding-left: 8px; }
.user a { margin-left: 7.500px; }
.user em { margin-left: 8.500px; font-size: 9.980px; letter-spacing: .02px; }
.good { color: green; }
.bad { color: #f00; }
</style>
